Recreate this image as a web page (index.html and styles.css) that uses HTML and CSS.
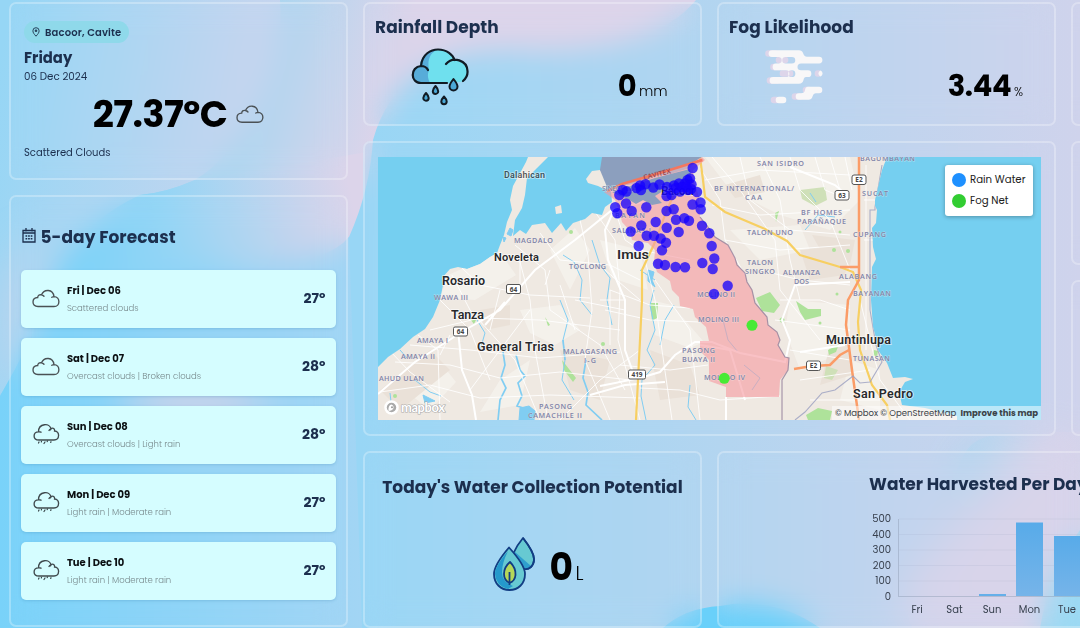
FILE: index.html
```html
<!DOCTYPE html>
<html lang="en">
<head>
<meta charset="utf-8">
<title>Water Harvest Dashboard</title>
<link rel="stylesheet" href="styles.css">
</head>
<body>
<svg class="backdrop" viewBox="0 0 1080 628" preserveAspectRatio="none" aria-hidden="true">
  <defs>
    <linearGradient id="gA" gradientUnits="userSpaceOnUse" x1="0" y1="60" x2="280" y2="110"><stop offset="0" stop-color="#96d6f5"/><stop offset=".85" stop-color="#c3d5ef"/><stop offset="1" stop-color="#c6d4ef"/></linearGradient>
    <linearGradient id="gB" gradientUnits="userSpaceOnUse" x1="190" y1="0" x2="400" y2="60"><stop offset="0" stop-color="#8fd6f5"/><stop offset=".35" stop-color="#aad6f0"/><stop offset="1" stop-color="#dcd4ea"/></linearGradient>
    <linearGradient id="gC" gradientUnits="userSpaceOnUse" x1="360" y1="0" x2="1080" y2="0"><stop offset="0" stop-color="#98d6f5"/><stop offset=".5" stop-color="#b3d5f0"/><stop offset="1" stop-color="#cfd3ec"/></linearGradient>
    <linearGradient id="gD" gradientUnits="userSpaceOnUse" x1="50" y1="260" x2="350" y2="190"><stop offset="0" stop-color="#74d1f9"/><stop offset=".4" stop-color="#94d5f5"/><stop offset="1" stop-color="#dcd4ea"/></linearGradient>
    <linearGradient id="gE" gradientUnits="userSpaceOnUse" x1="0" y1="0" x2="360" y2="0"><stop offset="0" stop-color="#79d2f9"/><stop offset="1" stop-color="#a2d5f4"/></linearGradient>
    <linearGradient id="gF" gradientUnits="userSpaceOnUse" x1="940" y1="450" x2="1040" y2="540"><stop offset="0" stop-color="#8ad9f4"/><stop offset=".55" stop-color="#dad4ea"/><stop offset="1" stop-color="#dad4ea"/></linearGradient>
    <filter id="soft" x="-50%" y="-50%" width="200%" height="200%"><feGaussianBlur stdDeviation="18"/></filter>
  </defs>
  <rect width="1080" height="628" fill="url(#gB)"/>
  <path d="M0 0H280C285 70 245 150 195 180Q165 193 140 195Q75 230 52 285Q30 350 0 396Z" fill="url(#gA)"/>
  <path d="M0 300Q6 260 40 235V340L0 396Z" fill="#b9d4ee" filter="url(#soft)"/>
  <path d="M52 285Q75 225 140 195Q165 193 195 180L380 150V628H0V396Q30 350 52 285Z" fill="url(#gD)"/>
  <path d="M373 140Q400 40 540 52Q655 50 696 0H1080V628H0V396Q30 345 52 290Q150 250 250 268Q330 262 349 237Q370 190 373 140Z" fill="url(#gC)"/>
  <path d="M0 396Q30 345 52 290Q150 255 250 268Q330 262 349 237L362 628H0Z" fill="url(#gE)"/>
  <ellipse cx="195" cy="405" rx="70" ry="40" fill="#ccd3ea" opacity=".85" filter="url(#soft)"/>
  <path d="M663 628Q685 608 720 606Q775 596 820 628Z" fill="#69d0fa"/>
  <path d="M967 450Q980 431 1030 432H1080V628H912Q890 575 960 530Q940 490 967 450Z" fill="url(#gF)" opacity=".3"/>
  <path d="M967 450Q980 431 1030 432H1080V628H912Q890 575 960 530Q940 490 967 450Z" fill="url(#gF)" opacity=".85" filter="url(#soft)"/>
  <path d="M1040 628Q1050 570 1080 530V628Z" fill="#9bd9f3"/>
</svg>

<main class="dashboard">
  <section class="column column--side">
    <article class="card today">
      <span class="pill">
        <svg class="pill__icon" viewBox="0 0 8 10"><path d="M4 9.200C2 7 .9 5.600.9 3.800A3.100 3.100 0 0 1 7.100 3.800C7.100 5.600 6 7 4 9.200Z" fill="none" stroke="#28445c" stroke-width="1"/><circle cx="4" cy="3.800" r="1.300" fill="#28445c"/></svg>
        <span class="pill__text">Bacoor, Cavite</span>
      </span>
      <div class="today__day">Friday</div>
      <div class="today__date">06 Dec 2024</div>
      <div class="today__temp"><span class="today__value">27.37ºC</span>
        <svg class="today__icon" viewBox="0 0 28 18"><use href="#cloud"/></svg>
      </div>
      <div class="today__desc">Scattered Clouds</div>
    </article>

    <article class="card forecast">
      <h2 class="title forecast__title">
        <svg class="forecast__cal" viewBox="0 0 14 15"><path d="M1 2.500H13V14H1ZM1 5H13M4 0V3.500M10 0V3.500" fill="none" stroke="#1c2f4e" stroke-width="1.300"/><path d="M3.500 8H10.500M3.500 10.700H10.500" stroke="#1c2f4e" stroke-width="1.500" stroke-dasharray="1.700 .9"/></svg>
        <span>5-day Forecast</span>
      </h2>
      <ul class="days">
        <li class="day"><svg class="day__icon" viewBox="0 0 28 22"><g transform="translate(0 1.300)"><use href="#cloud"/></g></svg><div class="day__body"><b>Fri | Dec 06</b><small>Scattered clouds</small></div><strong>27º</strong></li>
        <li class="day"><svg class="day__icon" viewBox="0 0 28 22"><g transform="translate(0 1.300)"><use href="#cloud"/></g></svg><div class="day__body"><b>Sat | Dec 07</b><small>Overcast clouds | Broken clouds</small></div><strong>28º</strong></li>
        <li class="day"><svg class="day__icon" viewBox="0 0 28 22"><use href="#rain"/></svg><div class="day__body"><b>Sun | Dec 08</b><small>Overcast clouds | Light rain</small></div><strong>28º</strong></li>
        <li class="day"><svg class="day__icon" viewBox="0 0 28 22"><use href="#rain"/></svg><div class="day__body"><b>Mon | Dec 09</b><small>Light rain | Moderate rain</small></div><strong>27º</strong></li>
        <li class="day"><svg class="day__icon" viewBox="0 0 28 22"><use href="#rain"/></svg><div class="day__body"><b>Tue | Dec 10</b><small>Light rain | Moderate rain</small></div><strong>27º</strong></li>
      </ul>
    </article>
  </section>

  <section class="board">
    <article class="card metric">
      <h2 class="title metric__title">Rainfall Depth</h2>
      <div class="metric__row">
        <svg class="metric__icon" viewBox="0 0 58 58">
          <path d="M10 35C-1 35-1 19 9 18C10 6 20 1 28 1S42 7 43 12C60 11 61 32 49 34L36 35Z" fill="#6fe0ee"/>
          <path d="M19 35H10C-1 35-1 19 9 18C10 6 20 1 28 1C19 4 16 12 18 22C16 27 17 31 19 35Z" fill="#57acd9"/>
          <path d="M36 35H10C-1 35-1 19 10 18Q15 18 17 22M10 18C11 6 20 1.500 27 1.500C36 1.500 42 7 43.500 12M35 16C42 8 56 12 56.500 23Q57 29 52 33" fill="none" stroke="#111b24" stroke-width="2.200" stroke-linecap="round"/>
          <g fill="#4ba8d6" stroke="#111b24" stroke-width="2" stroke-linejoin="round"><path d="M42.500 31Q38.500 36 38.500 38.500A4 4 0 0 0 46.500 38.500Q46.500 36 42.500 31Z"/><path d="M24.500 38Q21.800 41 21.800 43.200A2.700 2.700 0 0 0 27.200 43.200Q27.200 41 24.500 38Z"/><path d="M15 45Q12.300 48 12.300 50A2.700 2.700 0 0 0 17.700 50Q17.700 48 15 45Z"/><path d="M33 48.500Q30.300 51.500 30.300 53.500A2.700 2.700 0 0 0 35.700 53.500Q35.700 51.500 33 48.500Z"/></g>
        </svg>
        <div class="metric__reading"><b>0</b><span>mm</span></div>
      </div>
    </article>

    <article class="card metric">
      <h2 class="title metric__title">Fog Likelihood</h2>
      <div class="metric__row">
        <svg class="metric__icon" viewBox="0 0 58 58">
          <g stroke="#ddd5ea" fill="none" stroke-linecap="round" stroke-width="6.600"><path d="M3.500 5.500H10M14 12H20M8.500 19H16M18 25.500H25M5 32.500H12M53 25.500H53.500M41 42H44M30 48.500H35M9 52H12"/></g>
          <path d="M7 2.200H34Q37 2.200 38 5Q39 8.700 42 8.700H54A3.300 3.300 0 0 1 54 15.500H36Q32.500 15.500 32.500 19Q32.500 22.300 36 22.300H43A3.300 3.300 0 0 1 43 29H41Q39 29 38.500 32Q37.500 35.800 34 35.800H8A3.300 3.300 0 0 1 8 29H21A3.300 3.300 0 0 0 21 22.300H11A3.300 3.300 0 0 1 11 15.500H14A3.300 3.300 0 0 0 14 9H7A3.300 3.300 0 0 1 7 2.200ZM20.500 9A3.200 3.200 0 0 0 20.500 15.500H27A3.200 3.200 0 0 0 27 9ZM26.500 22.300A3.300 3.300 0 0 0 26.500 29H27A3.300 3.300 0 0 0 27 22.300Z" fill="#f8f7f8" fill-rule="evenodd"/>
          <path d="M43 38.700H54A3.300 3.300 0 0 1 54 45.300H51Q48.500 45.300 47.500 48.500Q46.500 51.800 43.500 51.800H34A3.300 3.300 0 0 1 34 45.200H36Q39.500 45.200 40 42Q40.500 38.700 43 38.700ZM14 48.700H18A3.300 3.300 0 0 1 18 55.300H14A3.300 3.300 0 0 1 14 48.700ZM55.500 22.500A3.200 3.200 0 0 1 55.500 28.500A3.200 3.200 0 0 1 55.500 22.500Z" fill="#f8f7f8"/>
        </svg>
        <div class="metric__reading metric__reading--fog"><b>3.44</b><span>%</span></div>
      </div>
    </article>

    <article class="card"></article>

    <article class="card map">
      <svg class="map__canvas" viewBox="378 157 663 263" preserveAspectRatio="none">
        <rect x="378" y="157" width="663" height="263" fill="#75cff0"/>
        <clipPath id="land"><path id="landShape" d="M378 367L388 357L400 349L413 337L425 329L433 317L440 300L443 285L442 278L450 269L458 267L467 269L480 264L490 257L497 253L500 245L504 235L507 222L512 210L510 200L513 186L519 175L526 162L528 157H548L537 168L527 178L525 195L522 208L515 220L513 236L520 230L526 234L532 225L545 223L552 233L561 223L566 231L573 223L585 219L592 213L602 215L605 207L612 202L611 191L622 186L645 181L655 176L670 174L690 168L700 157H887L882 170L878 187L875 200V206L877 210L876 223L872 228L873 247L876 259L872 267L871 300L873 327L876 338L878 350L887 363L893 378L905 377L913 379L905 382L899 392L902 405L925 408L957 416V420H378Z"/></clipPath>
        <use href="#landShape" fill="#efe9e2"/>
        <path d="M586 179L592 171L600 170L607 178L606 190L598 186L588 183ZM555 207L561 205L562 213L556 214Z" fill="#efe9e2"/>
        <g clip-path="url(#land)">
          <g fill="#f5f2ed" opacity=".8"><path d="M448 275L500 252L516 275L475 300L440 298ZM520 310L560 305L580 330L555 345L530 333ZM600 240L640 250L648 290L612 278ZM705 157L850 157L860 200L830 230L780 215L730 190ZM790 300L850 305L850 350L800 370L785 330ZM500 380L530 360L520 405L480 412ZM650 300L672 305L704 342L690 348L655 335ZM850 360L880 370L880 410L840 400ZM730 230L800 225L810 250L760 260ZM398 385L440 362L456 382L430 410ZM550 250L575 228L590 250L570 290Z"/></g>
          <g fill="#eae1d8"><path d="M380 390L430 350L450 370L400 410ZM560 350L610 360L600 400L570 390ZM650 350L690 365L700 395L660 400ZM800 250L850 245L845 275L810 280ZM480 310L510 305L510 325L485 330ZM830 345L850 345L852 375L820 385ZM725 185L760 175L765 192L735 198ZM812 235L855 240L850 265L825 258Z"/></g>
          <g fill="#aee29a"><path d="M756 298L770 292L780 305L774 313L762 311ZM796 301L808 309L821 309L821 316L805 320L800 312ZM650 303L658 303L657 318L652 321ZM806 415L818 408L832 411L830 420H808ZM545 317L550 325L548 326ZM562 360L576 378L573 382L564 370ZM874 350L878 351L877 357L873 355ZM775 213L779 211L776 222ZM828 350L839 344L836 352L829 355ZM470 319L476 320L474 324Z"/><circle cx="782" cy="320" r="2.500"/><circle cx="395" cy="396" r="2"/><circle cx="840" cy="232" r="1.500"/><circle cx="848" cy="251" r="2"/><circle cx="834" cy="250" r="2"/><circle cx="571" cy="232" r="2"/><circle cx="820" cy="323" r="1.500"/><circle cx="603" cy="344" r="2"/><circle cx="837" cy="294" r="1.500"/></g>
          <path d="M800 190L825 187L827 200L815 206L802 199ZM826 366L838 370L832 380L824 378Z" fill="#cfe0b8"/>
          <g fill="none" stroke="#80cdf2" stroke-width="1"><path stroke-width="1.700" d="M503 352L505 365L501 378L506 388L500 400L498 420M516 355L520 370L525 376L518 383L522 396L517 406L530 410M586 360L583 378L588 392L586 405L602 420M563 340L565 360"/><path d="M560 300L568 320L563 340L565 360L562 380L574 400M563 255L574 262L582 280L580 300L592 315M654 290L650 305L655 330L647 350L655 365L642 380L641 396L646 420M674 305L665 320L660 345M723 320L728 340L738 352M744 365L760 378L752 390M400 350L407 358M415 380L430 392L441 396M477 320L485 333L480 350M592 240L600 265L610 278L607 300L612 325M690 385L688 407L696 420M805 230L818 215L835 217M390 393L392 410M640 270L655 280M810 193L816 202"/><path d="M520 408L529 406L535 411L534 420H519ZM423 395L435 401L425 403ZM510 228L513 230L511 236L507 234ZM503 237L506 238L504 242ZM648 270L654 272L652 280L655 287L648 281Z" fill="#80cdf2"/></g>
          <g fill="none" stroke="#fff" stroke-width=".9" opacity=".95"><path d="M390 351L410 372L450 402M418 335L438 350L440 420M440 300L470 330L490 380M452 275L470 310L515 360L540 420M462 268L480 285L530 295L590 298M500 255L520 262L530 300L535 350L548 420M515 245L545 270L550 310L600 345L625 390M540 233L560 260L610 265L640 280M580 220L588 255L592 310L585 360L610 420M595 212L615 240L620 290L618 340L640 420M430 330L480 318L540 320L620 330M410 345L470 350L540 358L620 352M395 362L450 365L500 378L560 372L630 380M380 392L430 385L480 398L550 395L640 398M640 240L655 300L662 350L672 420M655 280L690 330L700 420M700 168L720 200L725 240L745 275M712 157L740 190L775 240L780 290L820 340M740 157L750 200L790 230L850 235M760 157L780 200L790 260L800 300M790 157L800 190L830 220L850 270M815 157L825 190L850 200M705 180L760 170L850 175M712 205L760 215L850 210M725 240L780 250L850 245M760 270L800 280L850 285M780 300L820 300L850 310M775 320L850 330M790 350L850 360M800 380L870 370M810 400L880 400M860 300L880 380L910 420M610 290L650 305L690 308M605 310L650 320L700 322M620 365L670 370L708 365M640 388L680 390L720 400L780 396M615 210L625 240L640 250L690 260M545 285L550 270M520 290V260M500 290L490 330M470 390L500 350L530 310M560 420L600 380L640 350M845 157L852 190M830 157L840 190M610 290V345M625 300H600M605 270L640 300M560 285L575 330M575 300L625 310M450 335L440 355M866 165V350M864 200H876M864 240H873"/></g>
          <g fill="none" stroke="#fff" stroke-width="2"><path d="M378 394L415 362L465 330L500 310L535 270L575 240L612 210L650 200M485 325L505 302M458 330L462 370L472 395L476 420M640 378L660 372L675 355L695 342L712 342L740 353L785 362L790 340L782 320L795 285L850 282M613 212L605 230L608 260L625 300L625 350L635 378M600 386L640 378M590 395L625 385L665 382M790 167L835 185L850 198M800 352L845 345M700 345L730 350L745 400M726 397V420"/></g>
          <path d="M700 157L703 180L705 197L725 212L765 229L787 241L800 255L840 267L853 272L861 290L858 322L860 350L872 385L887 405L890 420M656 240L642 270V300L636 420M680 180L665 215L656 240" fill="none" stroke="#f7cf62" stroke-width="2.200"/>
          <path d="M859 157V280L848 300L846 325L852 370L859 420M840 267H858M794 369L812 366L830 365L840 355L849 350M589 214Q590 199 604 191L622 185L660 173L703 160" fill="none" stroke="#fb9c67" stroke-width="2.500"/>
          <path d="M882 165L875 207V210H870V310L876 345L882 362L870 382L860 383L853 376L835 390L822 393L805 412L795 420" fill="none" stroke="#9a9fc0" stroke-width="1.100" opacity=".8"/>
        </g>
        <path d="M602 157H702L690 164L660 173L622 184L607 187L600 170Z" fill="#8c9fbe"/>
        <path d="M604 192L622 185L660 173L690 164L702 157L705 160L693 170L694 182L699 197L700 217L708 227L715 237L728 245L735 258L737 265L745 273L747 282L752 290L755 303L767 317L768 325L777 332L780 340L778 345L785 357L789 358L788 370L780 380L779 397H726V387L709 381V360L700 351V341H709L706 327L695 317L693 309L680 306L679 297L672 290L670 281L657 272L654 262L655 250L648 243L632 240L630 231L622 222L618 208L615 200Z" fill="#f59ba2" opacity=".62"/>
        <path d="M612 192L655 178L690 169L692 180L668 188L655 196L662 203L652 205L643 200L636 204L628 199L620 196Z" fill="#8c9fbe"/>
        <path d="M700 217L708 227L715 237L728 245L735 258L737 265L745 273L747 282L752 290L755 303L767 317L768 325L777 332L780 340L778 345L785 357L789 358L788 370L782 380V420" fill="none" stroke="#93819b" stroke-width="1.200" opacity=".8"/>
        <path d="M607 191L622 184L660 173L702 160" fill="none" stroke="#f4775f" stroke-width="2.500"/>
        <g class="map__area">
          <text x="757" y="166" textLength="47">SAN ISIDRO</text><text x="714" y="191" textLength="80">BF INTERNATIONAL/</text><text x="745" y="200" textLength="17">CAA</text><text x="801" y="215" textLength="41">BF HOMES</text><text x="797" y="224" textLength="49">PARAÑAQUE</text><text x="747" y="235" textLength="46">TALON UNO</text><text x="747" y="265" textLength="26">TALON</text><text x="745" y="274" textLength="30">SINGKO</text><text x="783" y="275" textLength="37">ALMANZA</text><text x="794" y="284" textLength="15">DOS</text><text x="839" y="279" textLength="38">ALABANG</text><text x="853" y="296" textLength="38">BAYANAN</text><text x="853" y="361" textLength="37">TUNASAN</text><text x="862" y="196" textLength="26">SUCAT</text><text x="853" y="237" textLength="33">CUPANG</text><text x="860" y="161" textLength="55">BAGUMBAYAN</text><text x="514" y="243" textLength="39">MAGDALO</text><text x="569" y="269" textLength="37">TOCLONG</text><text x="434" y="300" textLength="34">WAWA III</text><text x="417" y="343" textLength="31">AMAYA I</text><text x="401" y="359" textLength="34">AMAYA II</text><text x="379" y="381" textLength="45">AHUD ULAN</text><text x="563" y="354" textLength="54">MALAGASANG</text><text x="584" y="363" textLength="12">I-G</text><text x="539" y="409" textLength="33">PASONG</text><text x="528" y="418" textLength="54">CAMACHILE II</text><text x="682" y="353" textLength="33">PASONG</text><text x="682" y="362" textLength="33">BUAYA II</text><text x="697" y="297" textLength="38">MOLINO II</text><text x="698" y="322" textLength="41">MOLINO III</text><text x="704" y="380" textLength="41">MOLINO IV</text><text x="602" y="191" textLength="35">SINEGUELA</text><text x="612" y="233" textLength="39">SALINAS I</text><text x="615" y="218" textLength="30">BAYAN</text>
        </g>
        <g class="map__city">
          <text x="494" y="261" textLength="45" font-size="11">Noveleta</text><text x="442" y="285" textLength="43" font-size="12.500">Rosario</text><text x="451" y="319" textLength="33" font-size="12.500">Tanza</text><text x="477" y="350.500" textLength="77" font-size="12.500">General Trias</text><text x="617" y="259" textLength="32" font-size="13.500" lengthAdjust="spacingAndGlyphs">Imus</text><text x="826" y="344" textLength="65" font-size="12.500">Muntinlupa</text><text x="853" y="398" textLength="60" font-size="12.500">San Pedro</text><text x="661" y="195" textLength="34" font-size="12">Bacoor</text><text x="504" y="178" textLength="41" font-size="9" opacity=".75">Dalahican</text>
        </g>
        <text x="644" y="180" textLength="28" font-size="7" class="map__road" transform="rotate(-14 644 180)">CAVITEX</text>
        <g class="map__shield">
          <rect x="506.500" y="284.500" width="14" height="9" rx="1.500"/><text x="513.500" y="291.500">64</text>
          <rect x="453.500" y="327" width="14" height="9" rx="1.500"/><text x="460.500" y="334">64</text>
          <rect x="628.500" y="370" width="17" height="9" rx="1.500"/><text x="637" y="377">419</text>
          <rect x="852" y="175" width="14" height="9.500" rx="2"/><text x="859" y="182.200">E2</text>
          <rect x="835" y="190.500" width="14" height="9.500" rx="2"/><text x="842" y="197.700">63</text>
          <rect x="806.500" y="361" width="14" height="9.500" rx="2"/><text x="813.500" y="368.200">E2</text>
        </g>
        <g fill="#1400ff" opacity=".99" fill-opacity=".76">
          <circle cx="692.700" cy="168" r="5.200"/><circle cx="622.700" cy="190" r="5.200"/><circle cx="619.300" cy="195" r="5.200"/><circle cx="626.500" cy="191.500" r="5.200"/><circle cx="626" cy="203.500" r="5.200"/><circle cx="615.200" cy="207.300" r="5.200"/><circle cx="617.300" cy="213.300" r="5.200"/><circle cx="631.700" cy="211" r="5.200"/><circle cx="646.300" cy="207.300" r="5.200"/><circle cx="636.500" cy="188" r="5.200"/><circle cx="641" cy="190" r="5.200"/><circle cx="645.500" cy="184.300" r="5.200"/><circle cx="640" cy="185.500" r="5.200"/><circle cx="653.300" cy="187.500" r="5.200"/><circle cx="659.500" cy="184.500" r="5.200"/><circle cx="667" cy="187" r="5.200"/><circle cx="674" cy="185.500" r="5.200"/><circle cx="671.500" cy="195" r="5.200"/><circle cx="666.500" cy="196" r="5.200"/><circle cx="679" cy="183.500" r="5.200"/><circle cx="681.500" cy="187" r="5.200"/><circle cx="685" cy="183.500" r="5.200"/><circle cx="687.500" cy="180" r="5.200"/><circle cx="690" cy="178.500" r="5.200"/><circle cx="691.500" cy="184.500" r="5.200"/><circle cx="691" cy="189" r="5.200"/><circle cx="697" cy="192" r="5.200"/><circle cx="688" cy="190" r="5.200"/><circle cx="680" cy="191.500" r="5.200"/><circle cx="676" cy="188" r="5.200"/><circle cx="686" cy="187" r="5.200"/><circle cx="700.500" cy="202.500" r="5.200"/><circle cx="692.500" cy="204.500" r="5.200"/><circle cx="700.700" cy="209.300" r="5.200"/><circle cx="666.500" cy="211" r="5.200"/><circle cx="673.700" cy="209.300" r="5.200"/><circle cx="676" cy="219.700" r="5.200"/><circle cx="684.300" cy="218.300" r="5.200"/><circle cx="689" cy="220.700" r="5.200"/><circle cx="655.700" cy="222" r="5.200"/><circle cx="641.300" cy="225.500" r="5.200"/><circle cx="630.700" cy="231.500" r="5.200"/><circle cx="666.700" cy="227.700" r="5.200"/><circle cx="678.700" cy="232" r="5.200"/><circle cx="646.700" cy="235.700" r="5.200"/><circle cx="654" cy="235.700" r="5.200"/><circle cx="660.700" cy="238.500" r="5.200"/><circle cx="666" cy="242.700" r="5.200"/><circle cx="662" cy="250.300" r="5.200"/><circle cx="638.700" cy="246" r="5.200"/><circle cx="702" cy="225.700" r="5.200"/><circle cx="709.300" cy="233.300" r="5.200"/><circle cx="711.700" cy="246" r="5.200"/><circle cx="714.300" cy="258.500" r="5.200"/><circle cx="712.700" cy="269" r="5.200"/><circle cx="702.300" cy="263" r="5.200"/><circle cx="658" cy="263.700" r="5.200"/><circle cx="665" cy="265" r="5.200"/><circle cx="675.500" cy="267" r="5.200"/><circle cx="685" cy="267.300" r="5.200"/><circle cx="727.700" cy="285.700" r="5.200"/><circle cx="714" cy="294" r="5.200"/>
        </g>
        <g fill="#48ea35"><circle cx="752" cy="325.300" r="5.500"/><circle cx="724.300" cy="378.300" r="5.500"/></g>
        <circle cx="391.500" cy="407.500" r="6" fill="#aaa" stroke="#fff" stroke-width="2.500"/><path d="M388.500 411Q388 405 391.500 404.500A3 3 0 0 1 392 410Q390 411 388.500 411Z" fill="#fff"/><circle cx="392" cy="407.300" r="1" fill="#999"/>
        <text class="map__logo" x="401" y="411.500" textLength="44">mapbox</text>
      </svg>
      <div class="legend">
        <div class="legend__item"><i class="legend__dot legend__dot--rain"></i><span>Rain Water</span></div>
        <div class="legend__item"><i class="legend__dot legend__dot--fog"></i><span>Fog Net</span></div>
      </div>
      <div class="credit"><span>© Mapbox © OpenStreetMap</span><b>Improve this map</b></div>
    </article>

    <div class="edge-stack"><article class="card"></article><article class="card"></article></div>

    <article class="card potential">
      <h2 class="title">Today's Water Collection Potential</h2>
      <div class="potential__row">
        <svg class="potential__icon" viewBox="0 0 42 54" stroke="#123d83" stroke-width="1.800" stroke-linejoin="round">
          <path d="M30 1Q41 15 41 22C41 29 36 33 31 32L20 17Q24 8 30 1Z" fill="#67c9d2"/><path d="M22 15L38 29Q35 33 31 32L20 18Z" fill="#2f9fce" stroke="none"/>
          <path d="M30 1Q41 15 41 22C41 29 36 33 31 32" fill="none"/>
          <path d="M16 10.500Q32 28 32 37C32 47 25 53 16.500 53S1 47 1 37Q1 28 16 10.500Z" fill="#67c9d2"/><path d="M15 14Q2 29 2 37Q3 49 15 52L20 49Q9 45 9 35Q9 26 15 14Z" fill="#2599cc" stroke="none"/>
          <path d="M17 25Q23 31 22.500 38Q22 44 16.500 46Q11 43 11 37Q11 30 17 25Z" fill="#b5d75a"/><path d="M16.500 35V48" fill="none"/>
        </svg>
        <div class="potential__reading"><b>0</b><span>L</span></div>
      </div>
    </article>

    <article class="card harvest">
      <h2 class="title">Water Harvested Per Day</h2>
      <svg class="harvest__chart" viewBox="869 508 212 112">
        <defs><linearGradient id="bar" x1="0" y1="0" x2="0" y2="1"><stop offset="0" stop-color="#58abe9"/><stop offset="1" stop-color="#76b4e9"/></linearGradient></defs>
        <path d="M899 519H1081M899 534.500H1081M899 550H1081M899 565.500H1081M899 581H1081" stroke="#98a9c2" stroke-opacity=".17"/>
        <path d="M898.500 519V596M898 596.500H1081" stroke="#8c9bb2" stroke-opacity=".45" fill="none"/>
        <rect x="979" y="594" width="27" height="2" fill="#65afe9"/><rect x="1016" y="522.500" width="27" height="73.500" fill="url(#bar)"/><rect x="1054" y="536" width="27" height="60" fill="url(#bar)"/>
        <g class="harvest__ticks"><text x="891" y="522">500</text><text x="891" y="537.500">400</text><text x="891" y="553">300</text><text x="891" y="568.500">200</text><text x="891" y="584">100</text><text x="891" y="599.500">0</text></g>
        <g class="harvest__days"><text x="917" y="612.500">Fri</text><text x="954.500" y="612.500">Sat</text><text x="992" y="612.500">Sun</text><text x="1029.500" y="612.500">Mon</text><text x="1067" y="612.500">Tue</text></g>
      </svg>
    </article>
  </section>
</main>

<svg class="symbols" aria-hidden="true">
  <symbol id="cloud" viewBox="0 0 28 18" width="28" height="18" overflow="visible"><path d="M6 17.200C-.6 17.200-.6 8.500 5.700 8.200Q5.800 5 9.500 5.500C12-.5 21-.5 22 7.300C28.500 7.500 28.500 17.200 22 17.200ZM9.500 5.500Q11 5.800 12 7M22 7.300Q20.800 7.300 19.800 8" fill="none" stroke="#4a5155" stroke-width="1.350" stroke-linecap="round"/></symbol>
  <symbol id="rain" viewBox="0 0 28 22" width="28" height="22" overflow="visible"><path d="M7 16C.3 16 .8 7.800 6.500 7.800C6.500-1 18-1.300 19 5C20 3.300 23 4.300 22.600 7C28 7 28 16 22 16ZM6.500 7.800Q7.500 7.500 9 8.200M19 5Q17.500 5.500 17 6.500" fill="none" stroke="#3f4a4e" stroke-width="1.350" stroke-linecap="round"/><path d="M7 18L6.500 19M13 18L12 19.500M19 17.700L18.700 18.400M9.500 17.300L9.300 18M15.500 17L15.200 17.600" stroke="#39464a" stroke-width="1.200" stroke-linecap="round"/></symbol>
</svg>
</body>
</html>
```
FILE: styles.css
```css
* { box-sizing: border-box; }

html { overflow: hidden; }

body {
  margin: 0;
  width: 1080px;
  height: 628px;
  overflow: hidden;
  font-family: Poppins, Inter, "Open Sans", sans-serif;
  color: #1c2f4e;
}

.backdrop {
  position: absolute;
  inset: 0;
  width: 1080px;
  height: 628px;
  z-index: -1;
}

.symbols { position: absolute; width: 0; height: 0; }

.dashboard {
  display: grid;
  grid-template-columns: 339px 1048px;
  gap: 15px;
  width: 1080px;
  height: 628px;
  overflow: hidden;
  padding: 2px 0 0 9px;
}

.column--side {
  display: grid;
  grid-template-rows: 178px 432px;
  gap: 15px;
}

.board {
  display: grid;
  grid-template-columns: 339px 339px 339px;
  grid-template-rows: 124px 295px 177px;
  gap: 15px;
}

.card {
  border: 2px solid rgba(255, 255, 255, .27);
  border-radius: 7px;
  background: rgba(255, 255, 255, .01);
  backdrop-filter: blur(14px);
  min-width: 0;
}

.title {
  margin: 0;
  font-size: 17px;
  font-weight: 700;
  line-height: 24px;
  white-space: nowrap;
}

/* Current conditions */
.today { padding: 17px 13px 0; }

.pill {
  display: flex;
  align-items: center;
  gap: 5px;
  width: 105px;
  height: 22px;
  padding-left: 8px;
  border-radius: 11px;
  background: #8fd9ea;
}
.pill__icon { width: 8px; height: 10px; }
.pill__text { font-size: 10px; font-weight: 600; white-space: nowrap; letter-spacing: .15px; padding-top: 1px; }
.today__day { margin-top: 5px; font-size: 14.800px; font-weight: 700; line-height: 20px; }
.today__date { font-size: 10.300px; line-height: 17px; }
.today__temp {
  display: flex;
  align-items: center;
  justify-content: center;
  gap: 9px;
  height: 44px;
  margin-top: 7px;
  color: #000;
}
.today__value { font-size: 37px; font-weight: 700; letter-spacing: -.6px; }
.today__icon { width: 28px; height: 18px; }
.today__desc { margin-top: 9px; font-size: 10px; line-height: 16px; }

/* Forecast */
.forecast { padding: 28px 10px 0 9.500px; }
.forecast__title { display: flex; align-items: center; gap: 5px; padding-left: 1px; }
.forecast__title span { letter-spacing: .05px; }
.forecast__cal { width: 14px; height: 15px; margin-top: -3px; }
.days { list-style: none; margin: 21px 0 0; padding: 0; display: grid; gap: 10.500px; }
.day {
  display: flex;
  align-items: center;
  height: 57.500px;
  padding: 0 10.500px 0 11px;
  border-radius: 5px;
  background: #d5fdff;
  box-shadow: 0 1px 3px rgba(40, 110, 160, .22);
}
.day__icon { width: 28px; height: 22px; flex: none; }
.day__body { flex: 1; margin-left: 7.500px; padding-top: 1px; display: grid; gap: 3px; }
.day__body b { font-size: 10px; line-height: 15px; font-weight: 700; color: #0b1013; letter-spacing: -.05px; }
.day__body small { font-size: 8.500px; line-height: 14px; color: #788a8d; font-weight: 300; }
.day strong { font-size: 14px; font-weight: 700; }

/* Metric cards */
.metric { padding: 11px 10px 0; }
.metric__title { letter-spacing: .05px; }
.metric__row { display: flex; align-items: flex-start; padding: 9px 0 0 36px; }
.metric__icon { width: 58px; height: 58px; flex: none; }
.metric__reading { margin: 20px 22.500px 0 auto; display: flex; align-items: baseline; color: #000; }
.metric__reading b { font-size: 29px; line-height: 36px; font-weight: 700; letter-spacing: -.3px; }
.metric__reading span { font-size: 14px; font-weight: 300; margin-left: 2.500px; }
.metric__reading--fog { margin-right: 21px; }
.metric__reading--fog span { font-size: 12.500px; }

/* Map */
.map {
  position: relative;
  grid-column: span 2;
  padding: 14px 13px 0;
}
.map__canvas { display: block; width: 663px; height: 263px; }
.map text { font-family: "Open Sans", "Noto Sans", sans-serif; }
.map .map__area text { font-size: 7.200px; fill: #7f83a8; stroke: #f4f0ed; stroke-width: .8px; stroke-opacity: .5; paint-order: stroke; font-weight: 600; }
.map .map__city text { font-family: Roboto, sans-serif; font-weight: 600; fill: #28292c; stroke: #fff; stroke-width: 1.600px; stroke-opacity: .7; paint-order: stroke; }
.map .map__road { fill: #9c4148; font-weight: 600; }
.map__shield rect { fill: #fff; stroke: #555; stroke-width: 1px; }
.map__shield text { font-size: 6.500px; font-weight: 700; text-anchor: middle; fill: #444; }
.map .map__logo { font: 700 13px Lato, sans-serif; fill: #fff; stroke: #aaa; stroke-width: 1.200px; paint-order: stroke; }

.legend {
  position: absolute;
  top: 22px;
  right: 21px;
  width: 88px;
  height: 51px;
  padding: 4px 7px;
  border-radius: 3px;
  background: #fff;
  box-shadow: 0 1px 4px rgba(0, 0, 0, .3);
}
.legend__item { display: flex; align-items: center; gap: 4px; height: 21.500px; font-size: 10.200px; color: #222; white-space: nowrap; }
.legend__dot { flex: none; width: 14px; height: 14px; border-radius: 50%; }
.legend__dot--rain { background: #1e90ff; }
.legend__dot--fog { background: #32cd32; }

.credit {
  position: absolute;
  right: 13px;
  bottom: 14px;
  display: flex;
  justify-content: space-between;
  width: 209px;
  height: 14px;
  padding: 0 3px;
  background: rgba(255, 255, 255, .5);
  font-size: 8.500px;
  line-height: 14px;
  color: #3c4348;
  white-space: nowrap;
}

.edge-stack { display: grid; grid-template-rows: 124px 156px; gap: 15px; }

/* Collection potential */
.potential { padding-top: 22px; text-align: center; }
.potential__row { display: flex; justify-content: center; padding: 38px 0 0 11px; }
.potential__icon { width: 42px; height: 54px; }
.potential__reading { display: flex; align-items: baseline; margin: 9px 0 0 15px; color: #000; }
.potential__reading b { font-size: 36px; line-height: 44px; font-weight: 700; }
.potential__reading span { font-size: 19px; font-weight: 300; margin-left: 2.500px; }

/* Harvest chart */
.harvest { grid-column: span 2; padding: 19px 0 0 150px; }
.harvest__chart { display: block; width: 212px; height: 112px; margin-top: 12px; }
.harvest__chart text { font-size: 10px; fill: #38414f; }
.harvest__ticks { text-anchor: end; }
.harvest__days { text-anchor: middle; }
```
